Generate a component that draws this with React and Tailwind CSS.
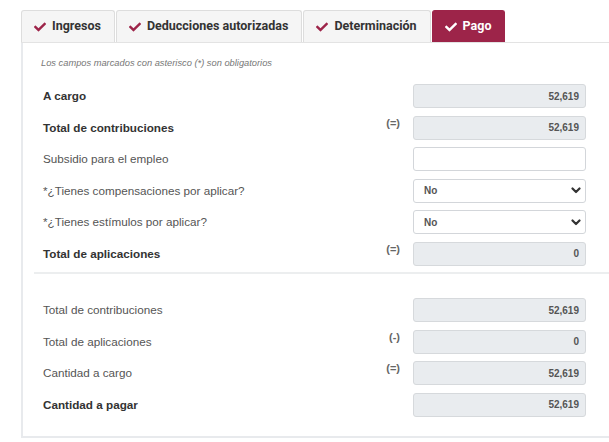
import React from "react";
import { FaCheck } from "react-icons/fa";

const tabs = [
  { label: "Ingresos", active: false },
  { label: "Deducciones autorizadas", active: false },
  { label: "Determinación", active: false },
  { label: "Pago", active: true },
];

function Tab({ label, active }) {
  return (
    <div
      className={
        "flex h-[32px] items-center gap-[6px] rounded-t-[3px] border border-b-0 pl-[12px] pr-[13px] mr-[1px] font-[family-name:Roboto,sans-serif] text-[12.5px] font-bold " +
        (active
          ? "border-[#9d2449] bg-[#9d2449] text-white"
          : "border-[#dddddd] bg-[#f5f5f5] text-[#333333]")
      }
    >
      <FaCheck size={12} className={active ? "text-white" : "text-[#9d2449]"} />
      <span>{label}</span>
    </div>
  );
}

function Chevron() {
  return (
    <svg width="10" height="7" viewBox="0 0 10 7" fill="none">
      <path d="M1.5 1.5 L5 5 L8.5 1.5" stroke="#333" strokeWidth="2.2" strokeLinecap="round" strokeLinejoin="round" />
    </svg>
  );
}

function Field({ kind, value }) {
  if (kind === "select") {
    return (
      <div className="flex h-[24px] w-[173px] items-center justify-between rounded-[3px] border border-[#d3d6da] bg-white pl-[10px] pr-[4px] text-[10px] font-bold text-[#555555]">
        <span>{value}</span>
        <Chevron />
      </div>
    );
  }
  if (kind === "empty") {
    return <div className="h-[24px] w-[173px] rounded-[3px] border border-[#d3d6da] bg-white" />;
  }
  return (
    <div className="flex h-[24px] w-[173px] items-center justify-end rounded-[3px] border border-[#d6d9dc] bg-[#e9ecef] pr-[6px] text-[10px] font-bold text-[#555555]">
      {value}
    </div>
  );
}

function Row({ label, bold, sign, kind = "value", value }) {
  return (
    <div className="flex h-[24px] w-[543px]">
      <div
        className={
          "flex-1 self-center text-[11.7px] " +
          (bold ? "font-bold text-[#333333]" : "text-[#555555]")
        }
      >
        {label}
      </div>
      <div className="mr-[13px] w-[16px] self-start text-right text-[11px] font-bold leading-[14px] text-[#666666]">
        {sign}
      </div>
      <Field kind={kind} value={value} />
    </div>
  );
}

export default function App() {
  return (
    <div className="h-[442px] w-[609px] overflow-hidden bg-white font-[family-name:'Liberation_Sans',Arial,sans-serif]">
      <div className="w-[720px] pl-[21px] pt-[10px]">
        {/* tab strip */}
        <div className="flex items-end border-b border-[#e3e3e3]">
          {tabs.map((t) => (
            <Tab key={t.label} {...t} />
          ))}
        </div>

        {/* panel body */}
        <div className="border-b-2 border-l-2 border-[#e8eaed] pb-[19px]">
          <div className="pl-[18px] pt-[14px] text-[9.3px] italic leading-[12px] text-[#777777]">
            Los campos marcados con asterisco (*) son obligatorios
          </div>

          <div className="mt-[15px] flex flex-col gap-[7.5px] pl-[20px]">
            <Row label="A cargo" bold value="52,619" />
            <Row label="Total de contribuciones" bold sign="(=)" value="52,619" />
            <Row label="Subsidio para el empleo" kind="empty" />
            <Row label="*¿Tienes compensaciones por aplicar?" kind="select" value="No" />
            <Row label="*¿Tienes estímulos por aplicar?" kind="select" value="No" />
            <Row label="Total de aplicaciones" bold sign="(=)" value="0" />
          </div>

          <div className="ml-[11px] mt-[6.5px] h-[2px] bg-[#eceeef]" />

          <div className="mt-[24px] flex flex-col gap-[7.5px] pl-[20px]">
            <Row label="Total de contribuciones" value="52,619" />
            <Row label="Total de aplicaciones" sign="(-)" value="0" />
            <Row label="Cantidad a cargo" sign="(=)" value="52,619" />
            <Row label="Cantidad a pagar" bold value="52,619" />
          </div>
        </div>
      </div>
    </div>
  );
}
